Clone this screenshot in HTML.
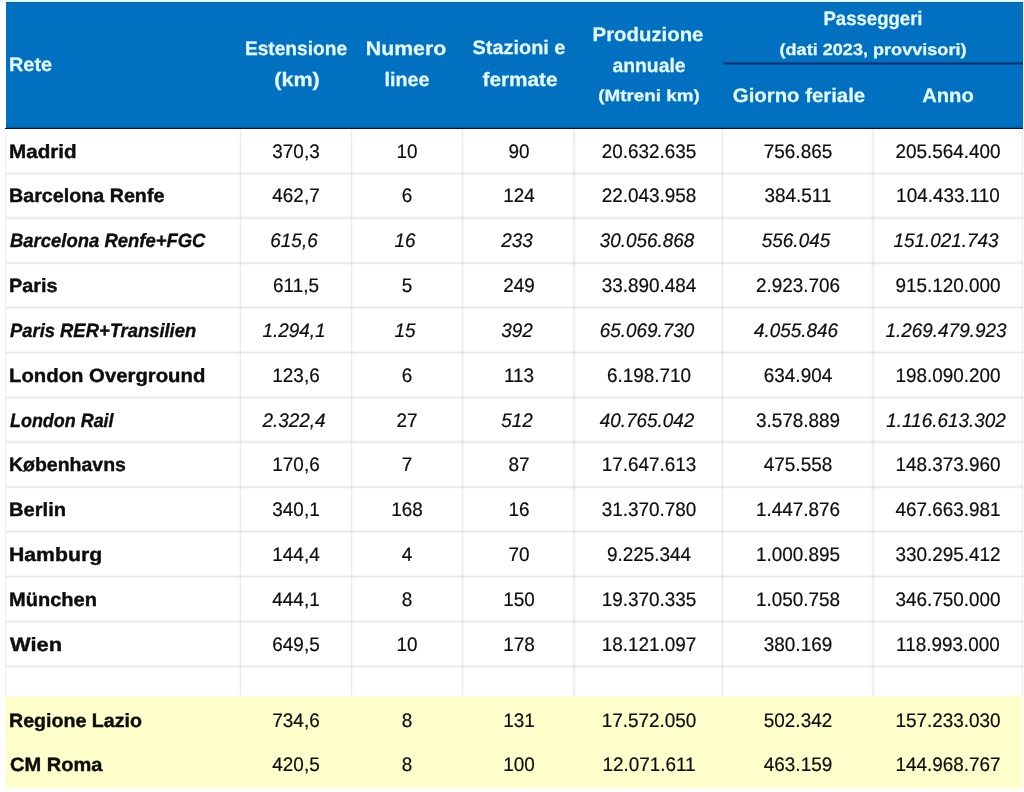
<!DOCTYPE html>
<html><head><meta charset="utf-8"><title>Tabella reti</title>
<style>
html,body{margin:0;padding:0;}
body{width:1024px;height:792px;background:#fff;position:relative;overflow:hidden;font-family:"Liberation Sans",sans-serif;text-rendering:geometricPrecision;}
div{position:absolute;}
.t{position:absolute;white-space:nowrap;line-height:24px;display:inline-block;}
.b{font-weight:bold;-webkit-text-stroke:0.4px currentColor;}
.h{font-weight:bold;-webkit-text-stroke:0.25px currentColor;}
.bi{font-weight:bold;font-style:italic;-webkit-text-stroke:0.35px currentColor;}
.i{font-style:italic;-webkit-text-stroke:0.2px currentColor;}
.r{font-weight:normal;-webkit-text-stroke:0.2px currentColor;}
</style></head><body>
<div id="wrap" style="left:0;top:0;width:1024px;height:792px;will-change:transform;">
<div style="left:0.00px;top:0.00px;width:1024.00px;height:2.00px;background:#e2fbff;"></div>
<div style="left:6.00px;top:2.00px;width:1016.50px;height:126.00px;background:#0070c0;"></div>
<div style="left:6.00px;top:2.00px;width:1016.50px;height:1.00px;background:#0a62a8;"></div>
<div style="left:6.00px;top:125.50px;width:1016.50px;height:2.50px;background:linear-gradient(to bottom,rgba(0,30,80,0),rgba(0,30,80,.35));"></div>
<div style="left:4.50px;top:127.60px;width:1018.00px;height:1.50px;background:#001233;"></div>
<div style="left:723.00px;top:61.70px;width:299.50px;height:3.20px;background:linear-gradient(to bottom,rgba(0,46,106,0),rgba(0,46,106,.95) 30%,rgba(0,46,106,.95) 70%,rgba(0,46,106,0));"></div>
<span id="t1" class="t h" style="top:53px;font-size:19.5px;color:#e6f8ff;left:8.98px;transform-origin:0 50%;transform:scaleX(1.0188);">Rete</span>
<span id="t2" class="t h" style="top:37px;font-size:19.5px;color:#e6f8ff;left:295.68px;transform:translateX(-50%) scaleX(0.9817);">Estensione</span>
<span id="t3" class="t h" style="top:68px;font-size:19.5px;color:#e6f8ff;left:296.77px;transform:translateX(-50%) scaleX(1.1063);">(km)</span>
<span id="t4" class="t h" style="top:37px;font-size:19.5px;color:#e6f8ff;left:406.35px;transform:translateX(-50%) scaleX(1.0925);">Numero</span>
<span id="t5" class="t h" style="top:68px;font-size:19.5px;color:#e6f8ff;left:407.12px;transform:translateX(-50%) scaleX(1.0094);">linee</span>
<span id="t6" class="t h" style="top:36px;font-size:19.5px;color:#e6f8ff;left:518.82px;transform:translateX(-50%) scaleX(1.0201);">Stazioni e</span>
<span id="t7" class="t h" style="top:68px;font-size:19.5px;color:#e6f8ff;left:519.52px;transform:translateX(-50%) scaleX(1.0651);">fermate</span>
<span id="t8" class="t h" style="top:23px;font-size:19.5px;color:#e6f8ff;left:647.90px;transform:translateX(-50%) scaleX(1.0444);">Produzione</span>
<span id="t9" class="t h" style="top:54px;font-size:19.5px;color:#e6f8ff;left:648.97px;transform:translateX(-50%) scaleX(0.9927);">annuale</span>
<span id="t10" class="t h" style="top:84px;font-size:16.2px;color:#e6f8ff;left:649.03px;transform:translateX(-50%) scaleX(1.1653);">(Mtreni km)</span>
<span id="t11" class="t h" style="top:7px;font-size:19.5px;color:#e6f8ff;left:872.87px;transform:translateX(-50%) scaleX(0.9518);">Passeggeri</span>
<span id="t12" class="t h" style="top:38px;font-size:16.2px;color:#e6f8ff;left:873.47px;transform:translateX(-50%) scaleX(1.1172);">(dati 2023, provvisori)</span>
<span id="t13" class="t h" style="top:84px;font-size:19.5px;color:#e6f8ff;left:799.17px;transform:translateX(-50%) scaleX(1.0439);">Giorno feriale</span>
<span id="t14" class="t h" style="top:84px;font-size:19.5px;color:#e6f8ff;left:947.80px;transform:translateX(-50%) scaleX(1.0360);">Anno</span>
<div style="left:238.60px;top:129.40px;width:3.40px;height:567.10px;background:linear-gradient(to right,rgba(0,0,0,0),rgba(0,0,0,.075) 50%,rgba(0,0,0,0));"></div>
<div style="left:349.90px;top:129.40px;width:3.40px;height:567.10px;background:linear-gradient(to right,rgba(0,0,0,0),rgba(0,0,0,.075) 50%,rgba(0,0,0,0));"></div>
<div style="left:460.80px;top:129.40px;width:3.40px;height:567.10px;background:linear-gradient(to right,rgba(0,0,0,0),rgba(0,0,0,.075) 50%,rgba(0,0,0,0));"></div>
<div style="left:572.20px;top:129.40px;width:3.40px;height:567.10px;background:linear-gradient(to right,rgba(0,0,0,0),rgba(0,0,0,.075) 50%,rgba(0,0,0,0));"></div>
<div style="left:721.00px;top:129.40px;width:3.40px;height:567.10px;background:linear-gradient(to right,rgba(0,0,0,0),rgba(0,0,0,.075) 50%,rgba(0,0,0,0));"></div>
<div style="left:871.40px;top:129.40px;width:3.40px;height:567.10px;background:linear-gradient(to right,rgba(0,0,0,0),rgba(0,0,0,.075) 50%,rgba(0,0,0,0));"></div>
<div style="left:4.20px;top:130.40px;width:3.00px;height:566.10px;background:linear-gradient(to right,rgba(0,0,0,0),rgba(0,0,0,.055) 50%,rgba(0,0,0,0));"></div>
<div style="left:1021.10px;top:130.40px;width:3.00px;height:566.10px;background:linear-gradient(to right,rgba(0,0,0,0),rgba(0,0,0,.055) 50%,rgba(0,0,0,0));"></div>
<div style="left:5.50px;top:171.52px;width:1017.00px;height:3.40px;background:linear-gradient(to bottom,rgba(0,0,0,0),rgba(0,0,0,.095) 50%,rgba(0,0,0,0));"></div>
<div style="left:5.50px;top:216.34px;width:1017.00px;height:3.40px;background:linear-gradient(to bottom,rgba(0,0,0,0),rgba(0,0,0,.095) 50%,rgba(0,0,0,0));"></div>
<div style="left:5.50px;top:261.16px;width:1017.00px;height:3.40px;background:linear-gradient(to bottom,rgba(0,0,0,0),rgba(0,0,0,.095) 50%,rgba(0,0,0,0));"></div>
<div style="left:5.50px;top:305.98px;width:1017.00px;height:3.40px;background:linear-gradient(to bottom,rgba(0,0,0,0),rgba(0,0,0,.095) 50%,rgba(0,0,0,0));"></div>
<div style="left:5.50px;top:350.80px;width:1017.00px;height:3.40px;background:linear-gradient(to bottom,rgba(0,0,0,0),rgba(0,0,0,.095) 50%,rgba(0,0,0,0));"></div>
<div style="left:5.50px;top:395.62px;width:1017.00px;height:3.40px;background:linear-gradient(to bottom,rgba(0,0,0,0),rgba(0,0,0,.095) 50%,rgba(0,0,0,0));"></div>
<div style="left:5.50px;top:440.44px;width:1017.00px;height:3.40px;background:linear-gradient(to bottom,rgba(0,0,0,0),rgba(0,0,0,.095) 50%,rgba(0,0,0,0));"></div>
<div style="left:5.50px;top:485.26px;width:1017.00px;height:3.40px;background:linear-gradient(to bottom,rgba(0,0,0,0),rgba(0,0,0,.095) 50%,rgba(0,0,0,0));"></div>
<div style="left:5.50px;top:530.08px;width:1017.00px;height:3.40px;background:linear-gradient(to bottom,rgba(0,0,0,0),rgba(0,0,0,.095) 50%,rgba(0,0,0,0));"></div>
<div style="left:5.50px;top:574.90px;width:1017.00px;height:3.40px;background:linear-gradient(to bottom,rgba(0,0,0,0),rgba(0,0,0,.095) 50%,rgba(0,0,0,0));"></div>
<div style="left:5.50px;top:619.72px;width:1017.00px;height:3.40px;background:linear-gradient(to bottom,rgba(0,0,0,0),rgba(0,0,0,.095) 50%,rgba(0,0,0,0));"></div>
<div style="left:5.50px;top:664.54px;width:1017.00px;height:3.40px;background:linear-gradient(to bottom,rgba(0,0,0,0),rgba(0,0,0,.095) 50%,rgba(0,0,0,0));"></div>
<div style="left:5.00px;top:696.40px;width:1019.00px;height:91.60px;background:#fffde2;"></div>
<div style="left:5.80px;top:697.00px;width:1014.20px;height:89.80px;background:#ffffcc;"></div>
<div style="left:5.80px;top:786.80px;width:1014.20px;height:2.00px;background:linear-gradient(to bottom,#ffffcc,#fffff4);"></div>
<span id="t15" class="t b" style="top:141px;font-size:19.2px;color:#0d0d0d;left:8.62px;transform-origin:0 50%;transform:scaleX(1.0756);">Madrid</span>
<span id="t16" class="t r" style="top:140px;font-size:19.6px;color:#0d0d0d;left:296.25px;transform:translateX(-50%) scaleX(0.9650);">370,3</span>
<span id="t17" class="t r" style="top:140px;font-size:19.6px;color:#0d0d0d;left:407.35px;transform:translateX(-50%) scaleX(0.9650);">10</span>
<span id="t18" class="t r" style="top:140px;font-size:19.6px;color:#0d0d0d;left:518.50px;transform:translateX(-50%) scaleX(0.9650);">90</span>
<span id="t19" class="t r" style="top:140px;font-size:19.6px;color:#0d0d0d;left:648.60px;transform:translateX(-50%) scaleX(0.9650);">20.632.635</span>
<span id="t20" class="t r" style="top:140px;font-size:19.6px;color:#0d0d0d;left:798.20px;transform:translateX(-50%) scaleX(0.9650);">756.865</span>
<span id="t21" class="t r" style="top:140px;font-size:19.6px;color:#0d0d0d;left:948.10px;transform:translateX(-50%) scaleX(0.9650);">205.564.400</span>
<span id="t22" class="t b" style="top:185px;font-size:19.2px;color:#0d0d0d;left:8.67px;transform-origin:0 50%;transform:scaleX(1.0262);">Barcelona Renfe</span>
<span id="t23" class="t r" style="top:184px;font-size:19.6px;color:#0d0d0d;left:296.25px;transform:translateX(-50%) scaleX(0.9650);">462,7</span>
<span id="t24" class="t r" style="top:184px;font-size:19.6px;color:#0d0d0d;left:407.35px;transform:translateX(-50%) scaleX(0.9650);">6</span>
<span id="t25" class="t r" style="top:184px;font-size:19.6px;color:#0d0d0d;left:518.50px;transform:translateX(-50%) scaleX(0.9650);">124</span>
<span id="t26" class="t r" style="top:184px;font-size:19.6px;color:#0d0d0d;left:648.60px;transform:translateX(-50%) scaleX(0.9650);">22.043.958</span>
<span id="t27" class="t r" style="top:184px;font-size:19.6px;color:#0d0d0d;left:798.20px;transform:translateX(-50%) scaleX(0.9650);">384.511</span>
<span id="t28" class="t r" style="top:184px;font-size:19.6px;color:#0d0d0d;left:948.10px;transform:translateX(-50%) scaleX(0.9650);">104.433.110</span>
<span id="t29" class="t bi" style="top:230px;font-size:19.2px;color:#0d0d0d;left:9.70px;transform-origin:0 50%;transform:scaleX(0.9620);">Barcelona Renfe+FGC</span>
<span id="t30" class="t i" style="top:229px;font-size:19.6px;color:#0d0d0d;left:294.35px;transform:translateX(-50%) scaleX(0.9650);">615,6</span>
<span id="t31" class="t i" style="top:229px;font-size:19.6px;color:#0d0d0d;left:405.45px;transform:translateX(-50%) scaleX(0.9650);">16</span>
<span id="t32" class="t i" style="top:229px;font-size:19.6px;color:#0d0d0d;left:516.60px;transform:translateX(-50%) scaleX(0.9650);">233</span>
<span id="t33" class="t i" style="top:229px;font-size:19.6px;color:#0d0d0d;left:646.70px;transform:translateX(-50%) scaleX(0.9650);">30.056.868</span>
<span id="t34" class="t i" style="top:229px;font-size:19.6px;color:#0d0d0d;left:796.30px;transform:translateX(-50%) scaleX(0.9650);">556.045</span>
<span id="t35" class="t i" style="top:229px;font-size:19.6px;color:#0d0d0d;left:946.20px;transform:translateX(-50%) scaleX(0.9650);">151.021.743</span>
<span id="t36" class="t b" style="top:275px;font-size:19.2px;color:#0d0d0d;left:8.67px;transform-origin:0 50%;transform:scaleX(1.0339);">Paris</span>
<span id="t37" class="t r" style="top:274px;font-size:19.6px;color:#0d0d0d;left:296.25px;transform:translateX(-50%) scaleX(0.9650);">611,5</span>
<span id="t38" class="t r" style="top:274px;font-size:19.6px;color:#0d0d0d;left:407.35px;transform:translateX(-50%) scaleX(0.9650);">5</span>
<span id="t39" class="t r" style="top:274px;font-size:19.6px;color:#0d0d0d;left:518.50px;transform:translateX(-50%) scaleX(0.9650);">249</span>
<span id="t40" class="t r" style="top:274px;font-size:19.6px;color:#0d0d0d;left:648.60px;transform:translateX(-50%) scaleX(0.9650);">33.890.484</span>
<span id="t41" class="t r" style="top:274px;font-size:19.6px;color:#0d0d0d;left:798.20px;transform:translateX(-50%) scaleX(0.9650);">2.923.706</span>
<span id="t42" class="t r" style="top:274px;font-size:19.6px;color:#0d0d0d;left:948.10px;transform:translateX(-50%) scaleX(0.9650);">915.120.000</span>
<span id="t43" class="t bi" style="top:320px;font-size:19.2px;color:#0d0d0d;left:9.70px;transform-origin:0 50%;transform:scaleX(0.9584);">Paris RER+Transilien</span>
<span id="t44" class="t i" style="top:319px;font-size:19.6px;color:#0d0d0d;left:294.35px;transform:translateX(-50%) scaleX(0.9650);">1.294,1</span>
<span id="t45" class="t i" style="top:319px;font-size:19.6px;color:#0d0d0d;left:405.45px;transform:translateX(-50%) scaleX(0.9650);">15</span>
<span id="t46" class="t i" style="top:319px;font-size:19.6px;color:#0d0d0d;left:516.60px;transform:translateX(-50%) scaleX(0.9650);">392</span>
<span id="t47" class="t i" style="top:319px;font-size:19.6px;color:#0d0d0d;left:646.70px;transform:translateX(-50%) scaleX(0.9650);">65.069.730</span>
<span id="t48" class="t i" style="top:319px;font-size:19.6px;color:#0d0d0d;left:796.30px;transform:translateX(-50%) scaleX(0.9650);">4.055.846</span>
<span id="t49" class="t i" style="top:319px;font-size:19.6px;color:#0d0d0d;left:946.20px;transform:translateX(-50%) scaleX(0.9650);">1.269.479.923</span>
<span id="t50" class="t b" style="top:365px;font-size:19.2px;color:#0d0d0d;left:8.64px;transform-origin:0 50%;transform:scaleX(1.0586);">London Overground</span>
<span id="t51" class="t r" style="top:364px;font-size:19.6px;color:#0d0d0d;left:296.25px;transform:translateX(-50%) scaleX(0.9650);">123,6</span>
<span id="t52" class="t r" style="top:364px;font-size:19.6px;color:#0d0d0d;left:407.35px;transform:translateX(-50%) scaleX(0.9650);">6</span>
<span id="t53" class="t r" style="top:364px;font-size:19.6px;color:#0d0d0d;left:518.50px;transform:translateX(-50%) scaleX(0.9650);">113</span>
<span id="t54" class="t r" style="top:364px;font-size:19.6px;color:#0d0d0d;left:648.60px;transform:translateX(-50%) scaleX(0.9650);">6.198.710</span>
<span id="t55" class="t r" style="top:364px;font-size:19.6px;color:#0d0d0d;left:798.20px;transform:translateX(-50%) scaleX(0.9650);">634.904</span>
<span id="t56" class="t r" style="top:364px;font-size:19.6px;color:#0d0d0d;left:948.10px;transform:translateX(-50%) scaleX(0.9650);">198.090.200</span>
<span id="t57" class="t bi" style="top:410px;font-size:19.2px;color:#0d0d0d;left:9.70px;transform-origin:0 50%;transform:scaleX(0.9344);">London Rail</span>
<span id="t58" class="t i" style="top:409px;font-size:19.6px;color:#0d0d0d;left:294.35px;transform:translateX(-50%) scaleX(0.9650);">2.322,4</span>
<span id="t59" class="t r" style="top:409px;font-size:19.6px;color:#0d0d0d;left:407.35px;transform:translateX(-50%) scaleX(0.9650);">27</span>
<span id="t60" class="t i" style="top:409px;font-size:19.6px;color:#0d0d0d;left:516.60px;transform:translateX(-50%) scaleX(0.9650);">512</span>
<span id="t61" class="t i" style="top:409px;font-size:19.6px;color:#0d0d0d;left:646.70px;transform:translateX(-50%) scaleX(0.9650);">40.765.042</span>
<span id="t62" class="t r" style="top:409px;font-size:19.6px;color:#0d0d0d;left:798.20px;transform:translateX(-50%) scaleX(0.9650);">3.578.889</span>
<span id="t63" class="t i" style="top:409px;font-size:19.6px;color:#0d0d0d;left:946.20px;transform:translateX(-50%) scaleX(0.9650);">1.116.613.302</span>
<span id="t64" class="t b" style="top:454px;font-size:19.2px;color:#0d0d0d;left:8.68px;transform-origin:0 50%;transform:scaleX(1.0152);">Københavns</span>
<span id="t65" class="t r" style="top:453px;font-size:19.6px;color:#0d0d0d;left:296.25px;transform:translateX(-50%) scaleX(0.9650);">170,6</span>
<span id="t66" class="t r" style="top:453px;font-size:19.6px;color:#0d0d0d;left:407.35px;transform:translateX(-50%) scaleX(0.9650);">7</span>
<span id="t67" class="t r" style="top:453px;font-size:19.6px;color:#0d0d0d;left:518.50px;transform:translateX(-50%) scaleX(0.9650);">87</span>
<span id="t68" class="t r" style="top:453px;font-size:19.6px;color:#0d0d0d;left:648.60px;transform:translateX(-50%) scaleX(0.9650);">17.647.613</span>
<span id="t69" class="t r" style="top:453px;font-size:19.6px;color:#0d0d0d;left:798.20px;transform:translateX(-50%) scaleX(0.9650);">475.558</span>
<span id="t70" class="t r" style="top:453px;font-size:19.6px;color:#0d0d0d;left:948.10px;transform:translateX(-50%) scaleX(0.9650);">148.373.960</span>
<span id="t71" class="t b" style="top:499px;font-size:19.2px;color:#0d0d0d;left:8.65px;transform-origin:0 50%;transform:scaleX(1.0483);">Berlin</span>
<span id="t72" class="t r" style="top:498px;font-size:19.6px;color:#0d0d0d;left:296.25px;transform:translateX(-50%) scaleX(0.9650);">340,1</span>
<span id="t73" class="t r" style="top:498px;font-size:19.6px;color:#0d0d0d;left:407.35px;transform:translateX(-50%) scaleX(0.9650);">168</span>
<span id="t74" class="t r" style="top:498px;font-size:19.6px;color:#0d0d0d;left:518.50px;transform:translateX(-50%) scaleX(0.9650);">16</span>
<span id="t75" class="t r" style="top:498px;font-size:19.6px;color:#0d0d0d;left:648.60px;transform:translateX(-50%) scaleX(0.9650);">31.370.780</span>
<span id="t76" class="t r" style="top:498px;font-size:19.6px;color:#0d0d0d;left:798.20px;transform:translateX(-50%) scaleX(0.9650);">1.447.876</span>
<span id="t77" class="t r" style="top:498px;font-size:19.6px;color:#0d0d0d;left:948.10px;transform:translateX(-50%) scaleX(0.9650);">467.663.981</span>
<span id="t78" class="t b" style="top:544px;font-size:19.2px;color:#0d0d0d;left:8.59px;transform-origin:0 50%;transform:scaleX(1.1055);">Hamburg</span>
<span id="t79" class="t r" style="top:543px;font-size:19.6px;color:#0d0d0d;left:296.25px;transform:translateX(-50%) scaleX(0.9650);">144,4</span>
<span id="t80" class="t r" style="top:543px;font-size:19.6px;color:#0d0d0d;left:407.35px;transform:translateX(-50%) scaleX(0.9650);">4</span>
<span id="t81" class="t r" style="top:543px;font-size:19.6px;color:#0d0d0d;left:518.50px;transform:translateX(-50%) scaleX(0.9650);">70</span>
<span id="t82" class="t r" style="top:543px;font-size:19.6px;color:#0d0d0d;left:648.60px;transform:translateX(-50%) scaleX(0.9650);">9.225.344</span>
<span id="t83" class="t r" style="top:543px;font-size:19.6px;color:#0d0d0d;left:798.20px;transform:translateX(-50%) scaleX(0.9650);">1.000.895</span>
<span id="t84" class="t r" style="top:543px;font-size:19.6px;color:#0d0d0d;left:948.10px;transform:translateX(-50%) scaleX(0.9650);">330.295.412</span>
<span id="t85" class="t b" style="top:589px;font-size:19.2px;color:#0d0d0d;left:8.65px;transform-origin:0 50%;transform:scaleX(1.0450);">München</span>
<span id="t86" class="t r" style="top:588px;font-size:19.6px;color:#0d0d0d;left:296.25px;transform:translateX(-50%) scaleX(0.9650);">444,1</span>
<span id="t87" class="t r" style="top:588px;font-size:19.6px;color:#0d0d0d;left:407.35px;transform:translateX(-50%) scaleX(0.9650);">8</span>
<span id="t88" class="t r" style="top:588px;font-size:19.6px;color:#0d0d0d;left:518.50px;transform:translateX(-50%) scaleX(0.9650);">150</span>
<span id="t89" class="t r" style="top:588px;font-size:19.6px;color:#0d0d0d;left:648.60px;transform:translateX(-50%) scaleX(0.9650);">19.370.335</span>
<span id="t90" class="t r" style="top:588px;font-size:19.6px;color:#0d0d0d;left:798.20px;transform:translateX(-50%) scaleX(0.9650);">1.050.758</span>
<span id="t91" class="t r" style="top:588px;font-size:19.6px;color:#0d0d0d;left:948.10px;transform:translateX(-50%) scaleX(0.9650);">346.750.000</span>
<span id="t92" class="t b" style="top:634px;font-size:19.2px;color:#0d0d0d;left:9.70px;transform-origin:0 50%;transform:scaleX(1.1392);">Wien</span>
<span id="t93" class="t r" style="top:633px;font-size:19.6px;color:#0d0d0d;left:296.25px;transform:translateX(-50%) scaleX(0.9650);">649,5</span>
<span id="t94" class="t r" style="top:633px;font-size:19.6px;color:#0d0d0d;left:407.35px;transform:translateX(-50%) scaleX(0.9650);">10</span>
<span id="t95" class="t r" style="top:633px;font-size:19.6px;color:#0d0d0d;left:518.50px;transform:translateX(-50%) scaleX(0.9650);">178</span>
<span id="t96" class="t r" style="top:633px;font-size:19.6px;color:#0d0d0d;left:648.60px;transform:translateX(-50%) scaleX(0.9650);">18.121.097</span>
<span id="t97" class="t r" style="top:633px;font-size:19.6px;color:#0d0d0d;left:798.20px;transform:translateX(-50%) scaleX(0.9650);">380.169</span>
<span id="t98" class="t r" style="top:633px;font-size:19.6px;color:#0d0d0d;left:948.10px;transform:translateX(-50%) scaleX(0.9650);">118.993.000</span>
<span id="t99" class="t b" style="top:710px;font-size:19.2px;color:#0d0d0d;left:8.68px;transform-origin:0 50%;transform:scaleX(1.0223);">Regione Lazio</span>
<span id="t100" class="t r" style="top:709px;font-size:19.6px;color:#0d0d0d;left:296.25px;transform:translateX(-50%) scaleX(0.9650);">734,6</span>
<span id="t101" class="t r" style="top:709px;font-size:19.6px;color:#0d0d0d;left:407.35px;transform:translateX(-50%) scaleX(0.9650);">8</span>
<span id="t102" class="t r" style="top:709px;font-size:19.6px;color:#0d0d0d;left:518.50px;transform:translateX(-50%) scaleX(0.9650);">131</span>
<span id="t103" class="t r" style="top:709px;font-size:19.6px;color:#0d0d0d;left:648.60px;transform:translateX(-50%) scaleX(0.9650);">17.572.050</span>
<span id="t104" class="t r" style="top:709px;font-size:19.6px;color:#0d0d0d;left:798.20px;transform:translateX(-50%) scaleX(0.9650);">502.342</span>
<span id="t105" class="t r" style="top:709px;font-size:19.6px;color:#0d0d0d;left:948.10px;transform:translateX(-50%) scaleX(0.9650);">157.233.030</span>
<span id="t106" class="t b" style="top:754px;font-size:19.2px;color:#0d0d0d;left:9.70px;transform-origin:0 50%;transform:scaleX(1.0438);">CM Roma</span>
<span id="t107" class="t r" style="top:753px;font-size:19.6px;color:#0d0d0d;left:296.25px;transform:translateX(-50%) scaleX(0.9650);">420,5</span>
<span id="t108" class="t r" style="top:753px;font-size:19.6px;color:#0d0d0d;left:407.35px;transform:translateX(-50%) scaleX(0.9650);">8</span>
<span id="t109" class="t r" style="top:753px;font-size:19.6px;color:#0d0d0d;left:518.50px;transform:translateX(-50%) scaleX(0.9650);">100</span>
<span id="t110" class="t r" style="top:753px;font-size:19.6px;color:#0d0d0d;left:648.60px;transform:translateX(-50%) scaleX(0.9650);">12.071.611</span>
<span id="t111" class="t r" style="top:753px;font-size:19.6px;color:#0d0d0d;left:798.20px;transform:translateX(-50%) scaleX(0.9650);">463.159</span>
<span id="t112" class="t r" style="top:753px;font-size:19.6px;color:#0d0d0d;left:948.10px;transform:translateX(-50%) scaleX(0.9650);">144.968.767</span>
</div>
</body></html>
